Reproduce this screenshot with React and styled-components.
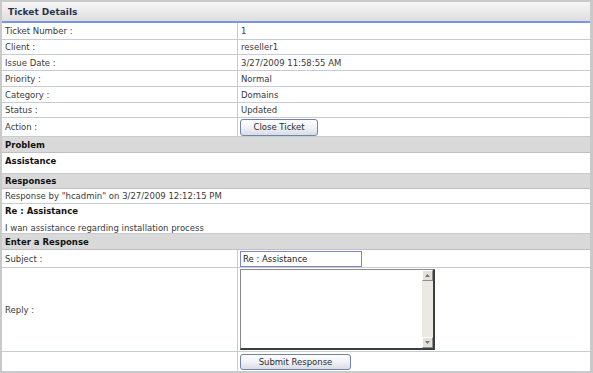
import React from "react";
import styled, { createGlobalStyle } from "styled-components";

const GlobalStyle = createGlobalStyle`
  html, body {
    margin: 0;
    padding: 0;
    background: #ffffff;
  }
  body {
    font-family: "DejaVu Sans", Verdana, sans-serif;
    font-size: 8.5px;
    color: #3a3a3a;
  }
`;

const Frame = styled.div`
  width: 593px;
  height: 373px;
  box-sizing: border-box;
  border: 2px solid #c9c9c9;
  border-bottom-width: 1px;
  border-right-width: 3px;
  overflow: hidden;
`;

const Title = styled.div`
  height: 21px;
  box-sizing: border-box;
  padding-left: 6px;
  display: flex;
  align-items: center;
  background: linear-gradient(#f6f6f6, #dedede);
  border-bottom: 2px solid #7996e2;
  font-weight: bold;
  font-size: 9px;
  color: #26344e;
`;

const Grid = styled.div`
  display: grid;
  grid-template-columns: 236px 1fr;
`;

const Cell = styled.div`
  height: ${(p) => p.$h}px;
  box-sizing: border-box;
  border-bottom: 1px solid #c7cbd5;
  padding: 0 3px;
  display: flex;
  align-items: center;
  white-space: nowrap;
`;

const Label = styled(Cell)`
  border-right: 1px solid #c7cbd5;
`;

const Section = styled(Cell)`
  grid-column: 1 / -1;
  background: #d9d9d9;
  border-bottom-color: #bfbfbf;
  font-weight: bold;
  color: #111;
`;

const Wide = styled(Cell)`
  grid-column: 1 / -1;
  flex-direction: column;
  align-items: flex-start;
  justify-content: flex-start;
  padding-top: ${(p) => p.$top || 0}px;
  gap: ${(p) => p.$gap || 0}px;
`;

const Strong = styled.span`
  font-weight: bold;
  color: #111;
`;

const Button = styled.button`
  width: ${(p) => p.$w}px;
  height: 17px;
  margin-left: -1px;
  padding: 0;
  border: 1px solid #6f84a6;
  border-radius: 3px;
  background: linear-gradient(#ffffff, #f0f2f5 50%, #d7dde6);
  font-family: "DejaVu Sans", Verdana, sans-serif;
  font-size: 8.5px;
  color: #2c2c2c;
`;

const TextInput = styled.input`
  width: 122px;
  height: 16px;
  margin-left: -1px;
  box-sizing: border-box;
  border: 1px solid #7b86cb;
  padding: 0 2px;
  font-family: "DejaVu Sans", Verdana, sans-serif;
  font-size: 8.5px;
  color: #222;
  outline: none;
`;

const AreaBox = styled.div`
  width: 195px;
  height: 81px;
  margin-left: -1px;
  box-sizing: border-box;
  display: flex;
  border: 1px solid #8a8a8a;
  border-right: 2px solid #3e3e3e;
  border-bottom: 2px solid #3e3e3e;
  background: #fff;
`;

const Area = styled.textarea`
  flex: 1;
  border: none;
  resize: none;
  outline: none;
  padding: 2px;
  font-family: "DejaVu Sans", Verdana, sans-serif;
  font-size: 8.5px;
`;

const Track = styled.div`
  width: 11px;
  display: flex;
  flex-direction: column;
  justify-content: space-between;
  background: #ece9e3;
`;

const Arrow = styled.div`
  height: 11px;
  box-sizing: border-box;
  border: 1px solid;
  border-color: #fff #8d8d8d #8d8d8d #fff;
  background: #e4e1dc;
  display: flex;
  align-items: center;
  justify-content: center;
`;

const Tri = ({ down }) => (
  <svg width="5" height="3" viewBox="0 0 5 3">
    <path d={down ? "M0 0H5L2.5 3Z" : "M0 3H5L2.5 0Z"} fill="#777" />
  </svg>
);

const details = [
  ["Ticket Number :", "1", 17],
  ["Client :", "reseller1", 15],
  ["Issue Date :", "3/27/2009 11:58:55 AM", 16],
  ["Priority :", "Normal", 16],
  ["Category :", "Domains", 16],
  ["Status :", "Updated", 15],
];

export default function App() {
  return (
    <>
      <GlobalStyle />
      <Frame>
        <Title>Ticket Details</Title>
        <Grid>
          {details.map(([label, value, h]) => (
            <React.Fragment key={label}>
              <Label $h={h}>{label}</Label>
              <Cell $h={h}>{value}</Cell>
            </React.Fragment>
          ))}
          <Label $h={19}>Action :</Label>
          <Cell $h={19}>
            <Button $w={78}>Close Ticket</Button>
          </Cell>

          <Section $h={16}>Problem</Section>
          <Wide $h={21} $top={3}>
            <Strong>Assistance</Strong>
          </Wide>

          <Section $h={15}>Responses</Section>
          <Wide $h={15} style={{ justifyContent: "center" }}>
            Response by "hcadmin" on 3/27/2009 12:12:15 PM
          </Wide>
          <Wide $h={30} $top={2} $gap={7}>
            <Strong>Re : Assistance</Strong>
            <span>I wan assistance regarding installation process</span>
          </Wide>

          <Section $h={16}>Enter a Response</Section>
          <Label $h={18}>Subject :</Label>
          <Cell $h={18}>
            <TextInput defaultValue="Re : Assistance" />
          </Cell>
          <Label $h={84}>Reply :</Label>
          <Cell $h={84}>
            <AreaBox>
              <Area />
              <Track>
                <Arrow>
                  <Tri />
                </Arrow>
                <Arrow>
                  <Tri down />
                </Arrow>
              </Track>
            </AreaBox>
          </Cell>
          <Label $h={20} />
          <Cell $h={20}>
            <Button $w={111} style={{ height: 16 }}>
              Submit Response
            </Button>
          </Cell>
        </Grid>
      </Frame>
    </>
  );
}
